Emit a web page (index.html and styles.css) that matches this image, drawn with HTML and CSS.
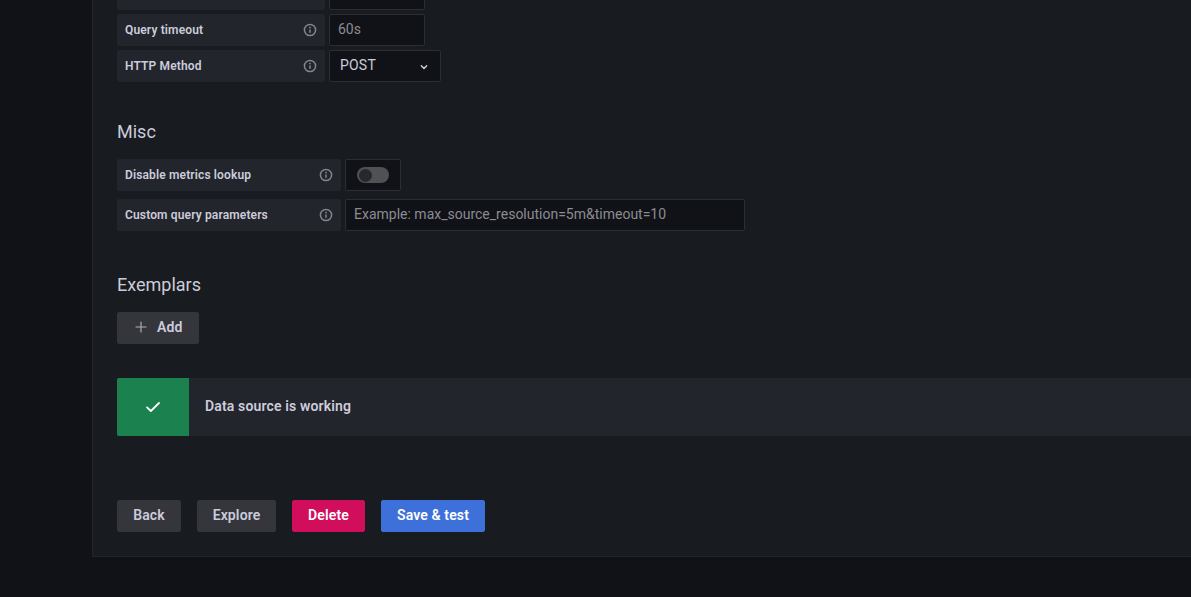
FILE: index.html
```html
<!DOCTYPE html>
<html lang="en">
<head>
<meta charset="utf-8">
<title>Data source settings</title>
<link rel="stylesheet" href="styles.css">
</head>
<body>
<svg class="sprite" width="0" height="0" aria-hidden="true">
  <symbol id="info" viewBox="0 0 24 24"><circle cx="12" cy="12" r="9.6" fill="none" stroke="currentColor" stroke-width="2.5"/><path fill="none" stroke="currentColor" stroke-width="2.6" stroke-linecap="round" d="M12 11.8v4"/><circle cx="12" cy="7.9" r="1.6" fill="currentColor"/></symbol>
</svg>
<main class="panel">
  <div class="row row-cut">
    <div class="label"></div>
    <div class="input short"></div>
  </div>
  <div class="row">
    <div class="label"><span>Query timeout</span><svg class="info"><use href="#info"/></svg></div>
    <div class="input short placeholder">60s</div>
  </div>
  <div class="row">
    <div class="label"><span>HTTP Method</span><svg class="info"><use href="#info"/></svg></div>
    <div class="input select"><span>POST</span>
      <svg class="chevron" viewBox="0 0 24 24"><path fill="none" stroke="currentColor" stroke-width="2.6" stroke-linecap="round" stroke-linejoin="round" d="M7.5 10 12 14.5l4.5-4.5"/></svg>
    </div>
  </div>

  <h3 class="heading misc">Misc</h3>
  <div class="row">
    <div class="label wide"><span>Disable metrics lookup</span><svg class="info"><use href="#info"/></svg></div>
    <div class="input switch-box"><div class="switch"><div class="knob"></div></div></div>
  </div>
  <div class="row gap8">
    <div class="label wide"><span>Custom query parameters</span><svg class="info"><use href="#info"/></svg></div>
    <div class="input long placeholder">Example: max_source_resolution=5m&amp;timeout=10</div>
  </div>

  <h3 class="heading exemplars">Exemplars</h3>
  <button class="btn add">
    <svg class="plus" viewBox="0 0 24 24"><path fill="none" stroke="currentColor" stroke-width="2" stroke-linecap="round" d="M12 3.5v17M3.5 12h17"/></svg>
    <span>Add</span>
  </button>

  <div class="alert">
    <div class="alert-icon">
      <svg class="check" viewBox="0 0 24 24"><path fill="none" stroke="currentColor" stroke-width="2.7" stroke-linecap="round" stroke-linejoin="round" d="M3 12.6 8.8 18 21 6"/></svg>
    </div>
    <div class="alert-text">Data source is working</div>
  </div>

  <div class="actions">
    <button class="btn back">Back</button>
    <button class="btn explore">Explore</button>
    <button class="btn danger">Delete</button>
    <button class="btn primary">Save &amp; test</button>
  </div>
</main>
</body>
</html>
```
FILE: styles.css
```css
* { box-sizing: border-box; }
html, body { height: 597px; margin: 0; overflow: hidden; }
body {
  background: #111217;
  font-family: Roboto, "Liberation Sans", sans-serif;
  color: #ccccdc;
  padding-left: 92px;
}
.sprite { position: absolute; }
.panel {
  background: #181b1f;
  border-left: 1px solid #22252b;
  border-bottom: 1px solid #22252b;
  height: 557px;
  padding-left: 24px;
  overflow: hidden;
}
.row { display: flex; gap: 4px; height: 32px; margin-top: 4px; }
.row-cut { margin-top: -22px; }
.row.gap8 { margin-top: 8px; }
.label {
  width: 208px;
  background: #22252b;
  border-radius: 2px;
  padding: 0 8px;
  display: flex;
  align-items: center;
  justify-content: space-between;
  font-size: 12px;
  font-weight: 600;
  letter-spacing: 0.14px;
  color: #ccccdc;
}
.label.wide { width: 224px; }
.info { width: 14px; height: 14px; color: #85868d; }
.input {
  background: #111217;
  border: 1px solid #2b2e34;
  border-radius: 2px;
  display: flex;
  align-items: center;
  font-size: 14px;
  padding: 0 8px 2px;
}
.short { width: 96px; }
.placeholder { color: #8b8c93; }
.select { width: 112px; padding: 0 9px 2px 10px; justify-content: space-between; color: #ccccdc; letter-spacing: 0.2px; }
.chevron { width: 14px; height: 14px; margin-top: 3px; }
.long { width: 400px; }
.switch-box { width: 56px; justify-content: center; padding: 0; }
.switch { width: 32px; height: 16px; border-radius: 8px; background: #505155; padding: 1.5px 1.5px; }
.knob { width: 13px; height: 13px; border-radius: 50%; background: #27282c; }
.heading { margin: 0; font-size: 18px; font-weight: 400; line-height: 22px; color: #ccccdc; }
.misc { margin-top: 39px; margin-bottom: 16px; }
.exemplars { margin-top: 43px; margin-bottom: 16px; }
.btn {
  height: 32px;
  border: 1px solid #34363c;
  border-radius: 2px;
  background: #34363c;
  color: #ccccdc;
  font: 600 14px Roboto, "Liberation Sans", sans-serif;
  letter-spacing: 0.12px;
  padding: 0 15px 2px;
  display: inline-flex;
  align-items: center;
  justify-content: center;
}
.back { width: 64px; }
.explore { width: 79px; }
.add { width: 82px; padding: 0 15px 2px 16px; justify-content: flex-start; }
.plus { width: 14px; height: 14px; margin-right: 9px; color: #aeafb6; }
.alert { display: flex; height: 58px; margin-top: 34px; background: #22252b; }
.alert-icon {
  width: 72px;
  background: #1b824f;
  border-radius: 2px 0 0 2px;
  display: flex;
  align-items: center;
  justify-content: center;
  color: #fff;
}
.check { width: 16px; height: 16px; }
.alert-text { padding: 0 0 2px 16px; display: flex; align-items: center; font-size: 14px; font-weight: 600; letter-spacing: 0.14px; }
.actions { display: flex; gap: 16px; margin-top: 64px; }
.danger { background: #d10e5c; border-color: #d10e5c; color: #fff; width: 73px; }
.primary { background: #3d71d9; border-color: #3d71d9; color: #fff; width: 104px; }
```
